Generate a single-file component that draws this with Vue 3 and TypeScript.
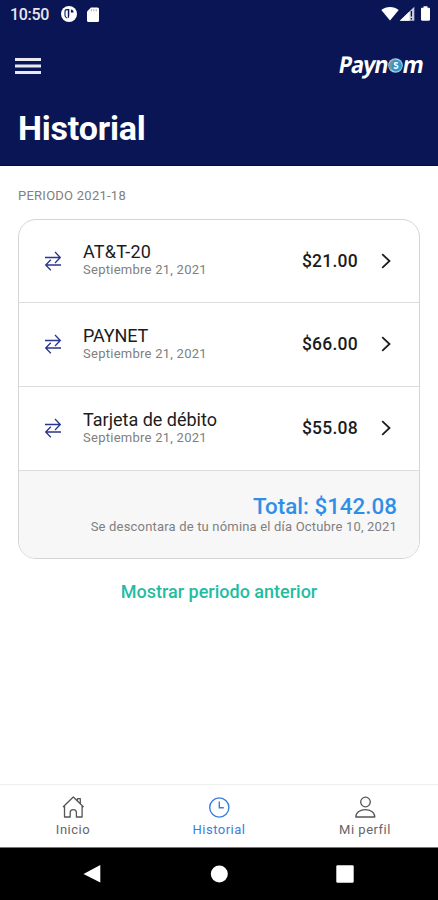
<script setup lang="ts">
interface Movement {
  name: string
  date: string
  amount: string
  nameClass: string
}

const movements: Movement[] = [
  { name: 'AT&T-20', date: 'Septiembre 21, 2021', amount: '$21.00', nameClass: 'spaced' },
  { name: 'PAYNET', date: 'Septiembre 21, 2021', amount: '$66.00', nameClass: 'tight' },
  { name: 'Tarjeta de débito', date: 'Septiembre 21, 2021', amount: '$55.08', nameClass: 'normal' },
]
</script>

<template>
  <div class="screen">
    <header class="header">
      <div class="status">
        <span class="clock">10:50</span>
        <svg class="status-app" viewBox="0 0 16 16">
          <circle cx="8" cy="8" r="8" fill="#fff" />
          <path d="M7.600 3.600H6C4.700 3.600 4 4.300 4 5.500v3.700c0 1.500.8 2.500 2 2.800" fill="none" stroke="#0a1556" stroke-width="1.100" />
          <path d="M6.800 3h1.500v6c0 2-.5 3-1.500 3.600zM9.900 3.600c1.600 0 2.600 1 2.600 2.800H9.900z" fill="#0a1556" />
        </svg>
        <svg class="status-sd" viewBox="0 0 12 15">
          <path d="M4 .5h6.500A1.500 1.500 0 0 1 12 2v11.500a1.500 1.500 0 0 1-1.500 1.500h-9A1.500 1.500 0 0 1 0 13.500V4.500z" fill="#fff" />
          <path d="M4.500 2.200v2M6.900 2.200v2M9.300 2.200v2" stroke="#a9aec8" stroke-width="1.100" />
        </svg>
        <span class="spacer"></span>
        <svg class="status-signal" viewBox="0 0 52 16">
          <path d="M.3 4.100C5 .1 13 .1 17.700 4.100L9 14.600z" fill="#fff" />
          <path d="M33.300.8v13.900H18.800z" fill="#c9ccdc" />
          <path d="M28.500 5.400v9.300h-9.700z" fill="#fff" />
          <path d="M30.400 5v5.500M30.400 12v1.600" stroke="#0a1556" stroke-width="1.300" />
          <path d="M42.500.2h4v1.600h1.300c.8 0 1.200.4 1.200 1.200v10.500c0 .8-.4 1.200-1.200 1.200h-6.600c-.8 0-1.200-.4-1.200-1.200V3c0-.8.4-1.200 1.200-1.200h1.300z" fill="#fff" />
        </svg>
      </div>
      <div class="brand-bar">
        <svg class="menu" viewBox="0 0 26 16" fill="#e8e9f0">
          <rect width="26" height="3" y="0" />
          <rect width="26" height="3" y="6.500" />
          <rect width="26" height="3" y="13" />
        </svg>
        <div class="brand">
          <span class="letters">Payn</span>
          <svg class="coin" viewBox="0 0 15 15">
            <circle cx="7.500" cy="7.500" r="7.300" fill="#a9cde0" />
            <circle cx="8" cy="7.700" r="5.900" fill="#3796c9" />
            <path d="M1 8.500C1 4 4 1 8 1.200 5 3 3.500 6 4 12 2 11 1.100 10 1 8.500z" fill="#78919e" />
            <path d="M10 5.200C8.500 4.200 6.300 4.700 6.500 6.100c.2 1.500 3.500 1 3.300 2.700-.2 1.600-2.500 1.700-4 .8" fill="none" stroke="#fff" stroke-width="1.500" />
          </svg>
          <span class="letters">m</span>
        </div>
      </div>
      <h1 class="title">Historial</h1>
    </header>

    <main class="content">
      <p class="period">PERIODO 2021-18</p>
      <section class="card">
        <div v-for="item in movements" :key="item.name" class="row">
          <svg class="swap" viewBox="0 0 18 20" fill="none" stroke="#28368c" stroke-width="1.300">
            <path d="M1 6.500h15M11 1l5.300 5.500L11 12M17 14H2M6.800 8.700L1.700 14l5.100 5.200" />
          </svg>
          <div class="info">
            <span class="name" :class="item.nameClass">{{ item.name }}</span>
            <span class="date">{{ item.date }}</span>
          </div>
          <span class="amount">{{ item.amount }}</span>
          <svg class="chevron" viewBox="0 0 10 16" fill="none" stroke="#1c1c1c" stroke-width="1.800">
            <path d="M1.200 1.200L8.500 8l-7.300 6.800" />
          </svg>
        </div>
        <div class="summary">
          <strong class="total">Total: $142.08</strong>
          <span class="note">Se descontara de tu nómina el día Octubre 10, 2021</span>
        </div>
      </section>
      <a class="previous">Mostrar periodo anterior</a>
    </main>

    <nav class="tabs">
      <div class="tab">
        <svg class="tab-icon" viewBox="0 0 22 22" fill="none" stroke="#555" stroke-width="1.300">
          <path d="M1 11L11.300 1l10.300 10M2.500 9.800V21h5.700v-4.500c0-3.800 6.200-3.800 6.200 0V21h5.700V9.800M15.500 4.500V2.700h2.800v4.800" stroke-linejoin="round" />
        </svg>
        <span>Inicio</span>
      </div>
      <div class="tab active">
        <svg class="tab-icon" viewBox="0 0 22 22" fill="none" stroke="#3b7de0" stroke-width="1.400">
          <circle cx="11.300" cy="11.500" r="9.600" />
          <path d="M11.300 5.500v6.300h4.500" />
        </svg>
        <span>Historial</span>
      </div>
      <div class="tab">
        <svg class="tab-icon" viewBox="0 0 22 22" fill="none" stroke="#555" stroke-width="1.300">
          <circle cx="11.500" cy="6" r="4.800" />
          <path d="M1.800 21c0-9.800 19-9.800 19 0z" stroke-linejoin="round" />
        </svg>
        <span>Mi perfil</span>
      </div>
    </nav>
    <footer class="system">
      <svg class="system-icon" viewBox="0 0 20 20" fill="#fff"><path d="M18.300 1v17.500L1.500 10z" /></svg>
      <svg class="system-icon" viewBox="0 0 20 20" fill="#fff"><circle cx="10.300" cy="10" r="8.500" /></svg>
      <svg class="system-icon" viewBox="0 0 20 20" fill="#fff"><rect x="1.300" y="1.300" width="17.400" height="17.400" rx="1.200" /></svg>
    </footer>
  </div>
</template>

<style>
body {
  margin: 0;
}
</style>

<style scoped>
.screen {
  box-sizing: border-box;
  width: 438px;
  height: 900px;
  display: flex;
  flex-direction: column;
  overflow: hidden;
  background: #fff;
  font-family: Roboto, sans-serif;
}
.header {
  box-sizing: border-box;
  height: 166px;
  background: #0a1556;
  color: #fff;
  border-bottom: 1px solid #060d3c;
}
.status {
  height: 28px;
  display: flex;
  align-items: center;
  padding: 0 5px 0 10px;
}
.clock {
  width: 51px;
  font-size: 16px;
  font-weight: 500;
  line-height: 28px;
  letter-spacing: -0.3px;
  padding-top: 1px;
  color: #e6e7ee;
}
.status-app {
  width: 16px;
  height: 16px;
  margin-right: 10px;
}
.status-sd {
  width: 12px;
  height: 15px;
}
.spacer {
  flex: 1;
}
.status-signal {
  width: 52px;
  height: 16px;
}
.brand-bar {
  height: 76px;
  display: flex;
  align-items: center;
  justify-content: space-between;
  padding: 0 15px;
}
.menu {
  width: 26px;
  height: 16px;
}
.brand {
  display: flex;
  align-items: center;
  font-family: "Open Sans", sans-serif;
  font-size: 21.5px;
  font-weight: 700;
  line-height: 28px;
  letter-spacing: -1px;
  margin-top: -5px;
}
.letters {
  transform: skewX(-10deg) scaleY(1.08);
}
.coin {
  width: 15px;
  height: 15px;
  margin: 4px 0 0;
}
.title {
  margin: 4px 0 0 18px;
  font-size: 34px;
  line-height: 40px;
  font-weight: 700;
  letter-spacing: -0.2px;
}
.content {
  flex: 1;
  display: flex;
  flex-direction: column;
  padding: 21px 18px 0;
}
.period {
  margin: 0 0 14px;
  font-size: 13px;
  line-height: 18px;
  letter-spacing: 0.25px;
  color: #808080;
}
.card {
  border: 1px solid #d5d5d5;
  border-radius: 18px;
  overflow: hidden;
}
.row {
  box-sizing: border-box;
  height: 84px;
  display: flex;
  align-items: center;
  padding: 0 28px 2px 25px;
  border-bottom: 1px solid #dcdcdc;
}
.row:first-child {
  height: 83px;
  padding-bottom: 1px;
}
.swap {
  width: 18px;
  height: 20px;
}
.info {
  flex: 1;
  display: flex;
  flex-direction: column;
  margin-left: 21px;
  padding-top: 2px;
}
.row:first-child .info {
  padding-top: 0;
}
.name {
  font-size: 18px;
  line-height: 19px;
  color: #1c1c1c;
}
.spaced {
  letter-spacing: 0.25px;
}
.tight {
  letter-spacing: -0.1px;
}
.date {
  font-size: 13px;
  line-height: 18px;
  letter-spacing: 0.26px;
  color: #808080;
}
.amount {
  font-size: 17.5px;
  font-weight: 500;
  letter-spacing: 0.25px;
  color: #1c1c1c;
}
.chevron {
  width: 10px;
  height: 16px;
  margin-left: 23px;
}
.summary {
  height: 87px;
  box-sizing: border-box;
  display: flex;
  flex-direction: column;
  align-items: flex-end;
  padding: 22px 22px 0 0;
  background: #f7f7f7;
}
.total {
  font-size: 22.4px;
  line-height: 26px;
  font-weight: 500;
  color: #2f8fe8;
}
.note {
  font-size: 13px;
  line-height: 16px;
  letter-spacing: 0.18px;
  color: #808080;
}
.previous {
  margin-top: 22px;
  text-align: center;
  font-size: 18px;
  line-height: 22px;
  font-weight: 500;
  color: #1fbda2;
}
.tabs {
  box-sizing: border-box;
  height: 63px;
  display: flex;
  border-top: 1px solid #eee;
}
.tab {
  flex: 1;
  display: flex;
  flex-direction: column;
  align-items: center;
  padding-top: 11px;
  font-size: 13px;
  line-height: 16px;
  letter-spacing: 0.5px;
  color: #666;
}
.active {
  color: #3b7de0;
}
.tab-icon {
  width: 22px;
  height: 22px;
  margin-bottom: 4px;
}
.system {
  box-sizing: border-box;
  height: 53px;
  display: flex;
  align-items: center;
  justify-content: space-between;
  padding: 0 83px 0 82px;
  background: #000;
  border-top: 1px solid #777;
}
.system-icon {
  width: 20px;
  height: 20px;
}
</style>
